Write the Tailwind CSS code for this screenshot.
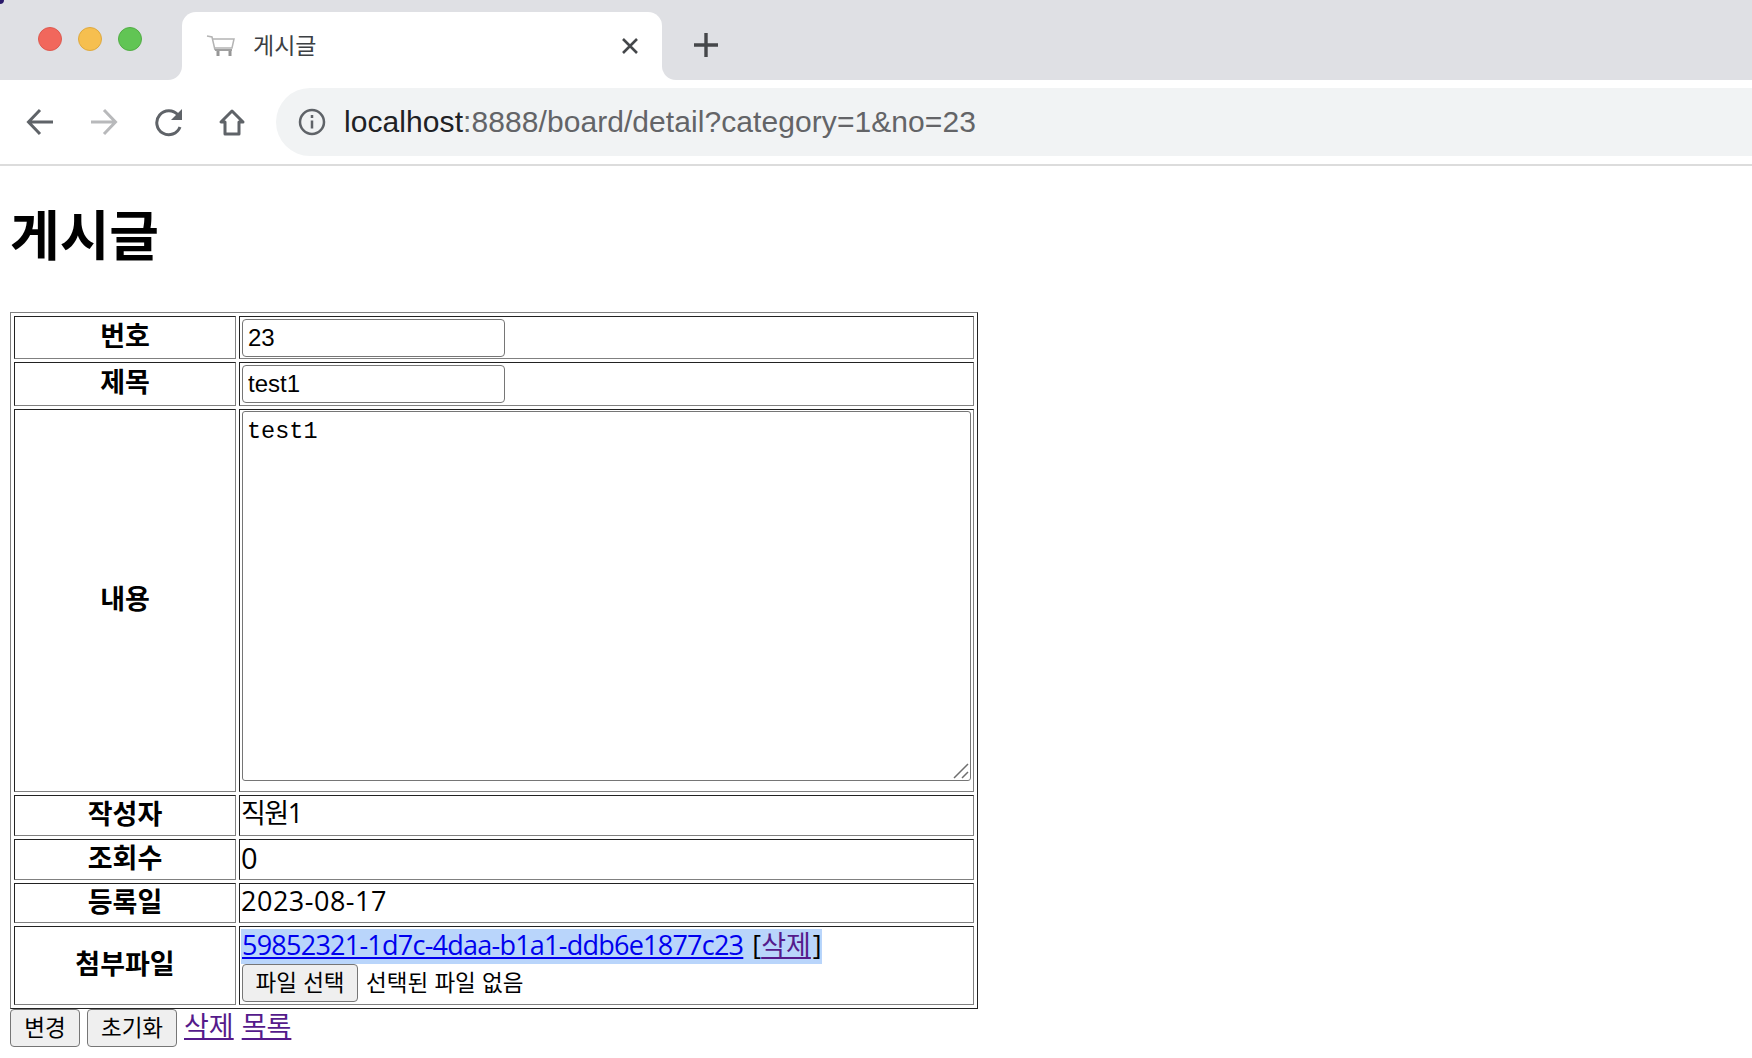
<!DOCTYPE html>
<html lang="ko">

<head>
  <meta charset="UTF-8">
  <title>게시글</title>
  <script src="https://cdn.jsdelivr.net/npm/@tailwindcss/browser@4"></script>
</head>

<body class="bg-white text-black overflow-hidden font-['Liberation_Sans','Noto_Sans_CJK_KR',sans-serif]">
  <!-- browser tabs -->
  <div class="relative flex h-[80px] bg-[#dfe0e4] pt-[12px]">
    <span class="absolute left-0 top-0 size-[4px] bg-[#2a1a6a] rounded-br-[4px]"></span>
    <div class="flex w-[182px] shrink-0 gap-[16px] pl-[38px] pt-[15px]">
      <span class="size-[24px] rounded-full bg-[#f1675c] border border-[#dd5a50]"></span>
      <span class="size-[24px] rounded-full bg-[#f6bf4f] border border-[#dea93f]"></span>
      <span class="size-[24px] rounded-full bg-[#61c554] border border-[#52ad45]"></span>
    </div>
    <div class="relative flex items-center w-[480px] h-[68px] bg-white rounded-t-[14px] pl-[24px] pr-[22px]">
      <span class="absolute -left-[14px] bottom-0 size-[14px] bg-white"><span class="block size-full bg-[#dfe0e4] rounded-br-[14px]"></span></span>
      <span class="absolute -right-[14px] bottom-0 size-[14px] bg-white"><span class="block size-full bg-[#dfe0e4] rounded-bl-[14px]"></span></span>
      <svg class="w-[30px] h-[22px] shrink-0" viewBox="0 0 30 22" fill="none" stroke="#b4b4b4">
        <path d="M1 1l5 1 3 13" stroke-width="1.500" />
        <path d="M7 4h21l-2 9H9" stroke-width="1.500" />
        <path d="M9 15h17" stroke="#a0a0a0" stroke-width="2" />
        <path d="M12 16v5M24 16v5" stroke="#969696" stroke-width="3" />
      </svg>
      <span class="ml-[17px] mb-[4px] text-[23px] leading-none text-[#3c4043] font-['Noto_Sans_CJK_KR',sans-serif]">게시글</span>
      <svg class="ml-auto size-[20px]" viewBox="0 0 20 20" stroke="#45474a" stroke-width="2.600" fill="none">
        <path d="M3 3l14 14M17 3L3 17" />
      </svg>
    </div>
    <svg class="ml-[31px] mt-[20px] size-[26px]" viewBox="0 0 26 26" stroke="#45474a" stroke-width="3.400" fill="none">
      <path d="M13 1v24M1 13h24" />
    </svg>
  </div>

  <!-- toolbar -->
  <div class="flex items-center h-[86px] border-b-2 border-[#dcdcdc] bg-white pl-[26px]">
    <svg class="size-[28px]" viewBox="0 0 28 28" fill="none" stroke="#5f6368" stroke-width="3">
      <path d="M27 14H3M14 2L2.500 14 14 26" />
    </svg>
    <svg class="ml-[36px] size-[28px]" viewBox="0 0 28 28" fill="none" stroke="#b8b9bb" stroke-width="3">
      <path d="M1 14h24M14 2l11.500 12L14 26" />
    </svg>
    <svg class="ml-[36px] size-[30px]" viewBox="0 0 30 30" fill="none" stroke="#5f6368" stroke-width="3">
      <path d="M26 20a12 12 0 1 1-2-12" />
      <path d="M28 2v11H17z" fill="#5f6368" stroke="none" />
    </svg>
    <svg class="ml-[34px] size-[28px]" viewBox="0 0 28 28" fill="none" stroke="#5f6368" stroke-width="3">
      <path d="M14 3L3 14h4v12h14V14h4z" stroke-linejoin="round" />
    </svg>
    <div class="flex items-center ml-[30px] flex-1 h-[68px] bg-[#f1f3f4] rounded-l-[34px] pl-[22px]">
      <svg class="size-[28px] shrink-0" viewBox="0 0 28 28" fill="none" stroke="#5f6368" stroke-width="2.500">
        <circle cx="14" cy="14" r="12" />
        <path d="M14 12.500v8M14 7v3" />
      </svg>
      <span class="ml-[18px] text-[30px] leading-none tracking-[0.07px] text-[#636467]"><span class="text-[#202124]">localhost</span>:8888/board/detail?category=1&amp;no=23</span>
    </div>
  </div>

  <!-- page -->
  <div class="pl-[10px]">
    <h1 class="pt-[37px] h-[146px] text-[54px] leading-[60px] font-bold font-['Noto_Sans_CJK_KR',sans-serif]">게시글</h1>

    <table class="table-fixed w-[968px] border-separate border-spacing-[3px] border border-t-[#808080] border-l-[#808080] border-r-[#222] border-b-[#222] text-[27px] leading-[32px] font-['Open_Sans','Noto_Sans_CJK_KR',sans-serif]">
      <colgroup>
        <col class="w-[222px]">
        <col class="w-[735px]">
      </colgroup>
      <tbody>
        <tr class="h-[43px]">
          <th class="p-0 pb-[4px] border border-t-[#222] border-l-[#222] border-r-[#808080] border-b-[#808080]">번호</th>
          <td class="p-0 px-[2px] border border-t-[#222] border-l-[#222] border-r-[#808080] border-b-[#808080]">
            <input type="text" value="23" class="block w-[263px] h-[38px] px-[5px] border border-[#767676] rounded-[4px] text-[24px] font-['Liberation_Sans',sans-serif]">
          </td>
        </tr>
        <tr class="h-[44px]">
          <th class="p-0 pb-[4px] border border-t-[#222] border-l-[#222] border-r-[#808080] border-b-[#808080]">제목</th>
          <td class="p-0 px-[2px] border border-t-[#222] border-l-[#222] border-r-[#808080] border-b-[#808080]">
            <input type="text" value="test1" class="block w-[263px] h-[38px] px-[5px] border border-[#767676] rounded-[4px] text-[24px] font-['Liberation_Sans',sans-serif]">
          </td>
        </tr>
        <tr class="h-[383px]">
          <th class="p-0 pb-[4px] border border-t-[#222] border-l-[#222] border-r-[#808080] border-b-[#808080]">내용</th>
          <td class="p-0 px-[2px] border border-t-[#222] border-l-[#222] border-r-[#808080] border-b-[#808080]">
            <div class="relative w-[729px] h-[370px] mb-[9px]">
              <textarea class="block size-full resize-none px-[4px] py-[6px] border border-[#767676] rounded-[3px] text-[23.500px] leading-[27px] font-['Liberation_Mono',monospace]">test1</textarea>
              <svg class="absolute right-[2px] bottom-[2px] size-[16px]" viewBox="0 0 16 16" fill="none" stroke="#6e6e6e" stroke-width="1.500">
                <path d="M1 15L15 1M9 15l6-6" />
              </svg>
            </div>
          </td>
        </tr>
        <tr class="h-[41px]">
          <th class="p-0 pb-[3px] border border-t-[#222] border-l-[#222] border-r-[#808080] border-b-[#808080]">작성자</th>
          <td class="p-0 pb-[6px] px-[1px] tracking-[-1.500px] border border-t-[#222] border-l-[#222] border-r-[#808080] border-b-[#808080]">직원1</td>
        </tr>
        <tr class="h-[41px]">
          <th class="p-0 pb-[3px] border border-t-[#222] border-l-[#222] border-r-[#808080] border-b-[#808080]">조회수</th>
          <td class="p-0 pb-[4px] px-[1px] text-[29px] border border-t-[#222] border-l-[#222] border-r-[#808080] border-b-[#808080]">0</td>
        </tr>
        <tr class="h-[40px]">
          <th class="p-0 pb-[3px] border border-t-[#222] border-l-[#222] border-r-[#808080] border-b-[#808080]">등록일</th>
          <td class="p-0 pb-[4px] px-[1px] border border-t-[#222] border-l-[#222] border-r-[#808080] border-b-[#808080] tracking-[0.5px]">2023-08-17</td>
        </tr>
        <tr class="h-[79px]">
          <th class="p-0 pb-[4px] border border-t-[#222] border-l-[#222] border-r-[#808080] border-b-[#808080]">첨부파일</th>
          <td class="p-0 px-[2px] border border-t-[#222] border-l-[#222] border-r-[#808080] border-b-[#808080]">
            <div class="h-[35px] leading-[31px] w-fit bg-[#b9d5fb] -ml-[1px] pl-[1px]"><a href="#" class="text-[#0000ee] underline tracking-[-0.760px]">59852321-1d7c-4daa-b1a1-ddb6e1877c23</a> <span class="ml-[2px]">[</span><a href="#" class="text-[#551a8b] underline">삭제</a><span class="ml-[2px]">]</span></div>
            <div class="flex items-center">
              <button class="w-[116px] h-[38px] pb-[3px] bg-[#efefef] border border-[#767676] rounded-[4px] text-[22.500px] leading-none font-['Noto_Sans_CJK_KR',sans-serif]">파일 선택</button>
              <span class="ml-[8px] mb-[3px] text-[22.500px] leading-none font-['Noto_Sans_CJK_KR',sans-serif]">선택된 파일 없음</span>
            </div>
          </td>
        </tr>
      </tbody>
    </table>

    <div class="flex items-center h-[38px] text-[27px] leading-[32px] font-['Noto_Sans_CJK_KR',sans-serif]">
      <button class="w-[70px] h-[38px] pb-[3px] bg-[#efefef] border border-[#767676] rounded-[4px] text-[22.500px] leading-none">변경</button>
      <button class="ml-[7px] w-[90px] h-[38px] pb-[3px] bg-[#efefef] border border-[#767676] rounded-[4px] text-[22.500px] leading-none">초기화</button>
      <a href="#" class="ml-[7px] mb-[6px] text-[#551a8b] underline">삭제</a>
      <a href="#" class="ml-[8px] mb-[6px] text-[#551a8b] underline">목록</a>
    </div>
  </div>
</body>

</html>
